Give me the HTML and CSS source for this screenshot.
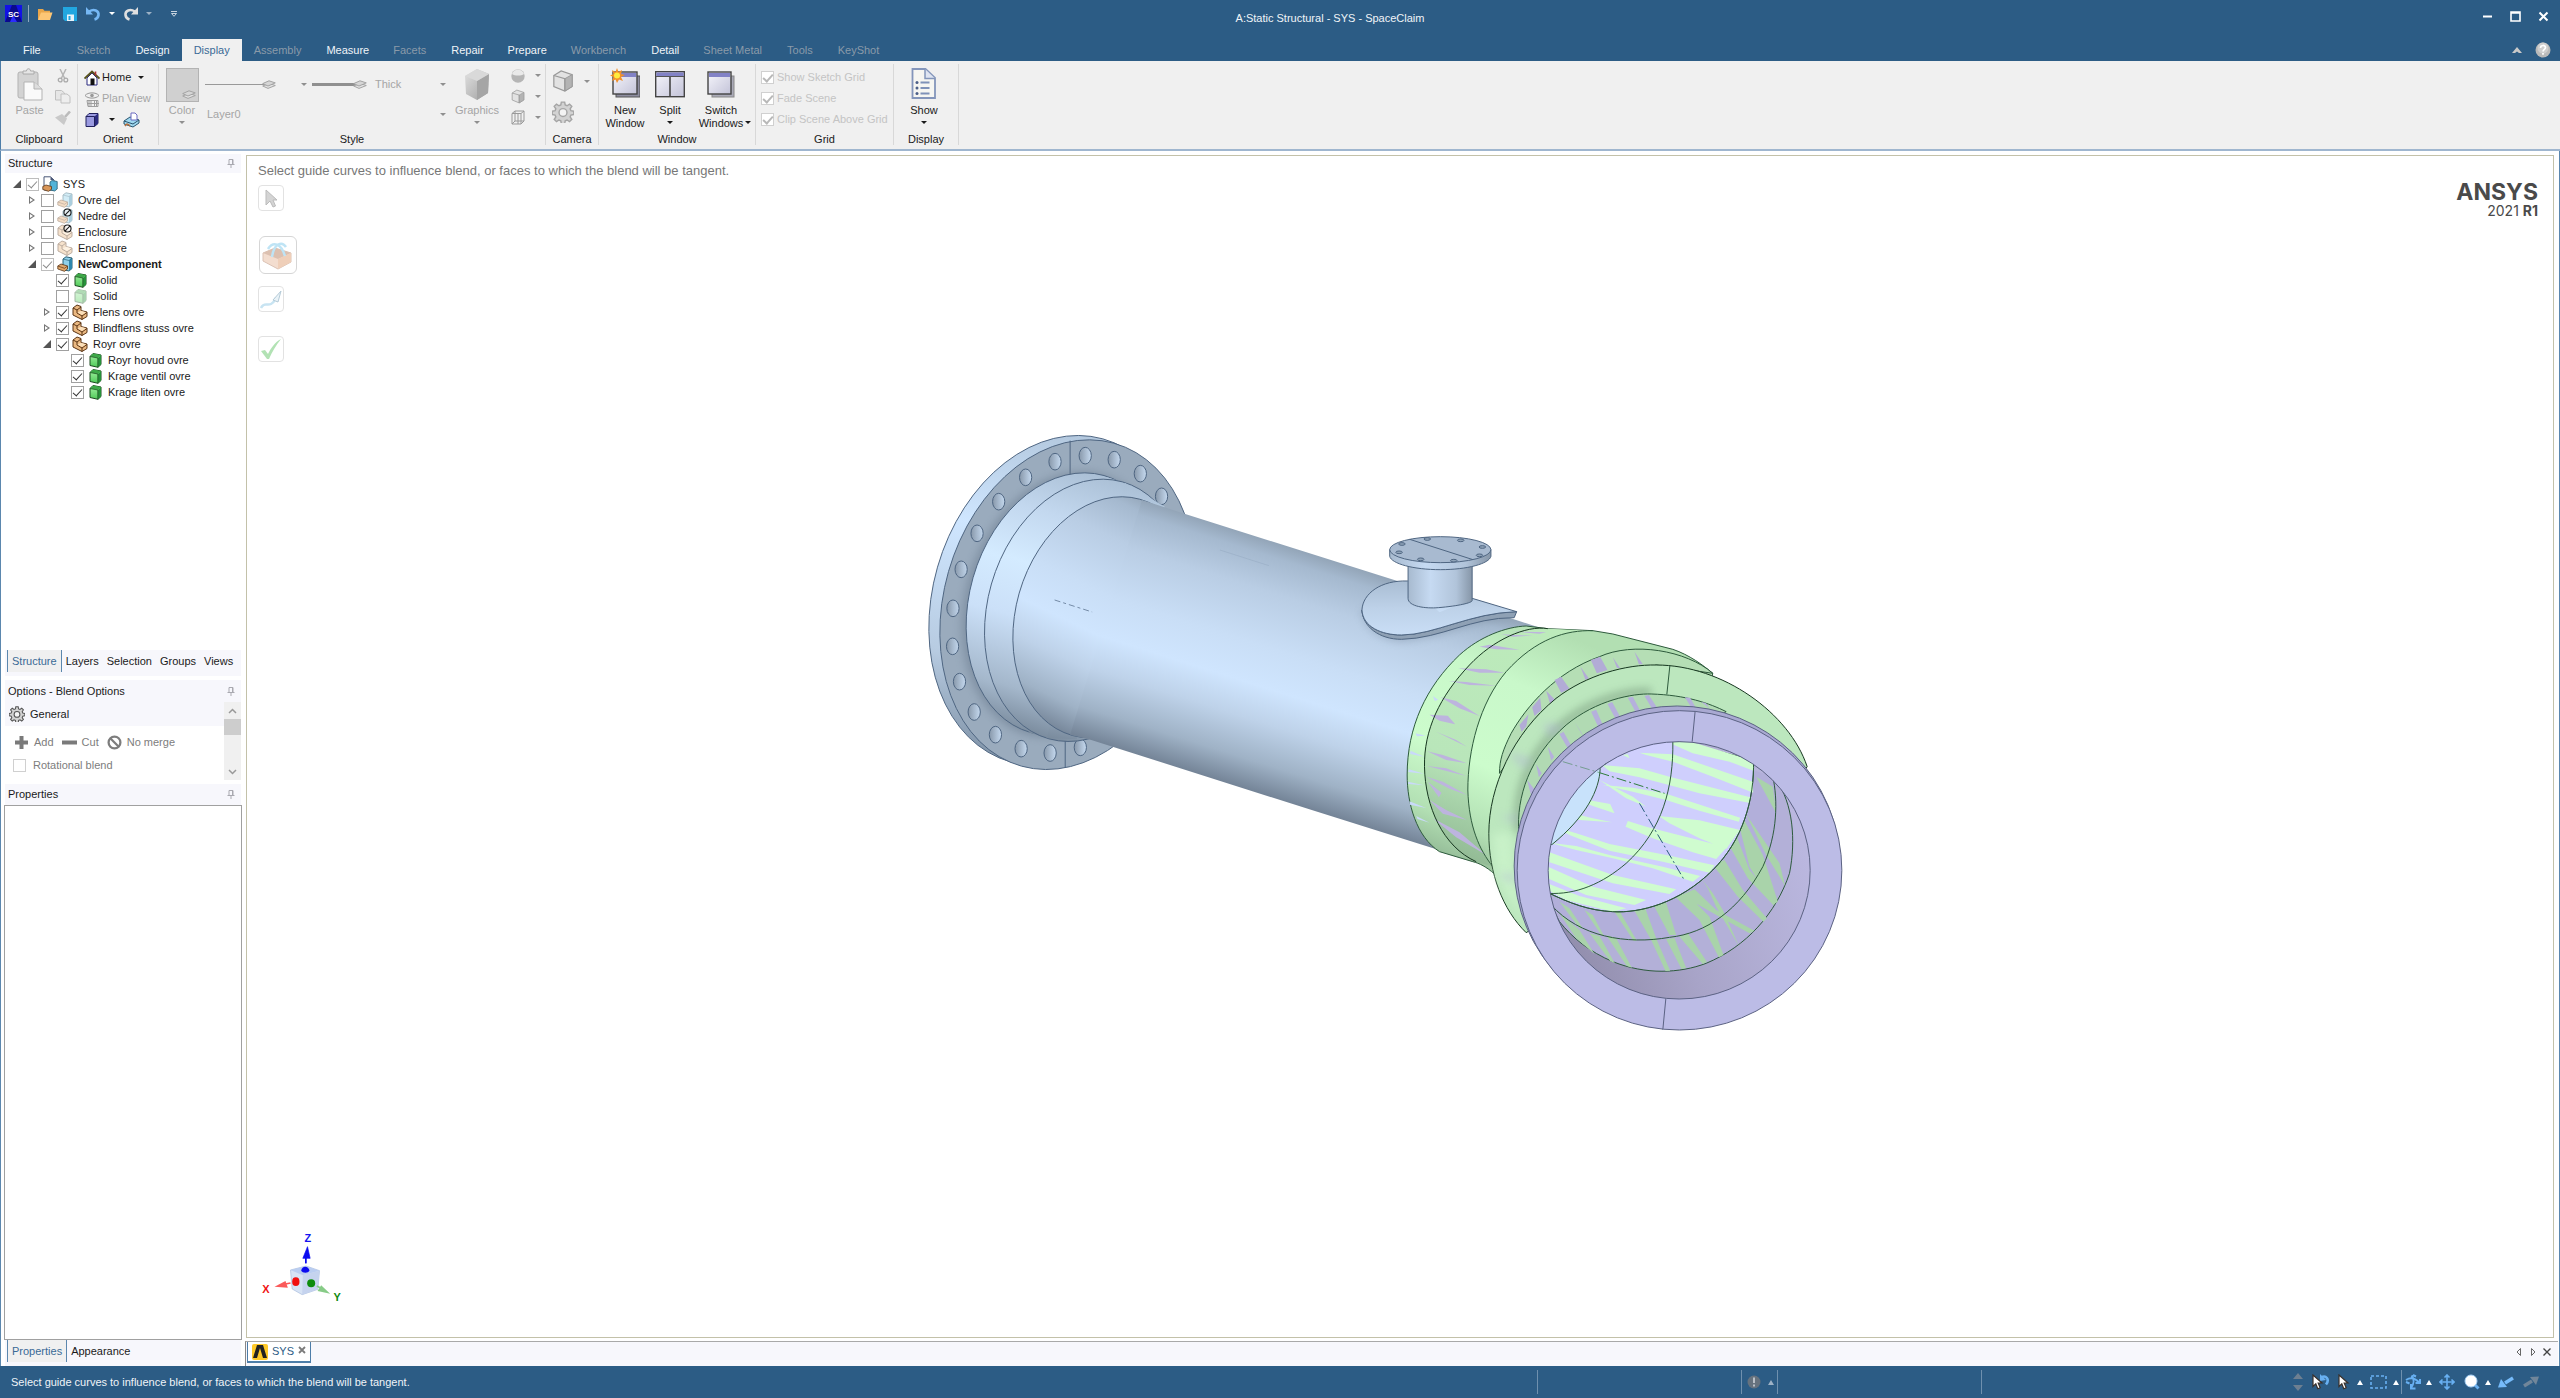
FILE: index.html
```html
<!DOCTYPE html>
<html lang="en">
<head>
<meta charset="utf-8">
<title>A:Static Structural - SYS - SpaceClaim</title>
<link rel="stylesheet" href="styles.css">
</head>
<body>
<svg class="defs" aria-hidden="true">
  <defs>
    <linearGradient id="gWin" x1="0" y1="0" x2="1" y2="1"><stop offset="0" stop-color="#f6f6fc"/><stop offset="1" stop-color="#c3c3d8"/></linearGradient>
    <linearGradient id="gGrey" x1="0" y1="0" x2="1" y2="1"><stop offset="0" stop-color="#e2e2e2"/><stop offset="1" stop-color="#9f9f9f"/></linearGradient>
    <linearGradient id="gGreen" x1="0" y1="0" x2="0" y2="1"><stop offset="0" stop-color="#a4f2a4"/><stop offset="1" stop-color="#4fca58"/></linearGradient>
    <symbol id="solid" viewBox="0 0 16 16"><path d="M3 4.500 6 1.500 14 3v9.500l-3 2.800-8-1.800z" fill="url(#gGreen)" stroke="#1c4a20"/><path d="M10.800 6 14 3v9.500l-3.200 2.800z" fill="#27923a"/><path d="M3 4.500 6 1.500 14 3l-3.200 3z" fill="#3da848"/><path d="M3 4.500 10.800 6v9.300" fill="none" stroke="#1c4a20" stroke-width=".7"/></symbol>
    <symbol id="part" viewBox="0 0 16 16"><path d="M1 4 5 1l4 1.500v4l6 1.500v4.500L10 15.500 1 11z" fill="#eab881" stroke="#5b3515"/><path d="M1 4l4 2 4-3M5 6v3l5 3 5-3.500M10 12v3.500" fill="none" stroke="#5b3515"/><path d="M5.500 8.500 9 6.700l5 1.500-4 2.800z" fill="#fbe0bb"/></symbol>
    <symbol id="comp" viewBox="0 0 16 16"><path d="M6 3 9 .8l6 1.200v10.500L12 15 6 13.500z" fill="#8fd0ea" stroke="#2b6075"/><path d="M12 4.500 15 2v10.500L12 15z" fill="#2f87ad"/><path d="M6 3l6 1.500L15 2" fill="none" stroke="#2b6075" stroke-width=".7"/><path d="M.8 10 4 8l6.500 2v3L7.500 15.300.8 13z" fill="#e0a76b" stroke="#5b3515" stroke-width=".8"/><path d="M.8 10 7.500 12.300l3-2.300" fill="none" stroke="#5b3515" stroke-width=".7"/></symbol>
    <symbol id="doc" viewBox="0 0 16 16"><path d="M2 .8h6.500L12 4v10H2z" fill="#fff" stroke="#4b5878"/><path d="M8.500.8V4H12z" fill="#4b5878"/><path d="M8 6l2-1.500 5.200 1V13l-2.500 2L8 14z" fill="#52b4d8" stroke="#2b6075" stroke-width=".8"/><path d="M.8 10.500 4 9l5.500 1.500v2.800L6.500 15.300.8 13.500z" fill="#d9975a" stroke="#5b3515" stroke-width=".8"/></symbol>
    <symbol id="ban" viewBox="0 0 16 16"><circle cx="8" cy="8" r="6.300" fill="none" stroke="currentColor" stroke-width="2.400"/><path d="M3.500 3.500l9 9" stroke="currentColor" stroke-width="2.400"/></symbol>
    <symbol id="banr" viewBox="0 0 16 16"><circle cx="8" cy="8" r="6.300" fill="#fff" fill-opacity=".6" stroke="currentColor" stroke-width="2"/><path d="M12.500 3.500l-9 9" stroke="currentColor" stroke-width="2"/></symbol>
    <symbol id="gear" viewBox="0 0 20 20"><path d="M8.500 1h3l.5 2.600 1.700.7 2.200-1.500 2.100 2.100-1.500 2.200.7 1.700 2.600.5v3l-2.600.5-.7 1.700 1.500 2.200-2.100 2.100-2.200-1.500-1.700.7-.5 2.600h-3L8 18l-1.700-.7-2.200 1.500L2 16.700l1.500-2.200-.7-1.700L.2 12.300v-3l2.600-.5.7-1.700L2 4.900l2.100-2.100 2.200 1.500L8 3.600z" fill="#d2d2d2" stroke="currentColor" stroke-width="1.300"/><circle cx="10" cy="10.500" r="3.600" fill="#f4f4f4" stroke="currentColor" stroke-width="1.300"/></symbol>
    <symbol id="cubeg" viewBox="0 0 24 24"><path d="M2 6 10 1l12 4v13l-8 5L2 18z" fill="#e2e2e2" stroke="#999" stroke-width="1.300"/><path d="M14 9.500 22 5v13l-8 5z" fill="#b3b3b3" stroke="#999"/><path d="M2 6l12 3.500V23" fill="none" stroke="#999" stroke-width="1.300"/></symbol>
    <symbol id="stack" viewBox="0 0 14 9"><path d="M.7 6 7 3.400 13.300 5.500 6 8.400z" fill="#e3e3e3" stroke="#a3a3a3"/><path d="M.7 3.600 7 .8l6.300 2.100L6 6z" fill="#d6d6d6" stroke="#a3a3a3"/></symbol>
    <symbol id="pin" viewBox="0 0 8 9"><path d="M2 .5h4v5H2zM.5 5.500h7M4 5.500V9" fill="none" stroke="#a9a9b0"/><path d="M5 .5h1v5H5z" fill="#a9a9b0"/></symbol>
    <symbol id="cursor" viewBox="0 0 12 16"><path d="M1 1v11.500l2.800-2.600 2 4.800 2.400-1-2-4.700H10z" fill="#fff" stroke="#3a302a" stroke-width="1.200"/></symbol>
  </defs>
</svg>

<header class="titlebar">
  <div class="qat">
    <svg class="sc" viewBox="0 0 17 17" role="img" aria-label="SpaceClaim"><rect width="17" height="17" fill="#1212e6"/><path d="M0 17 7 0h4l6 17z" fill="#0a0a8c"/><path d="M5 17 8 10l4 7z" fill="#2b2bff"/><text x="8.500" y="11.500" text-anchor="middle" class="sc-text">SC</text></svg>
    <span class="qat-sep"></span>
    <button class="q q-open" aria-label="Open"><svg viewBox="0 0 16 14"><path d="M1 13V2h5l1.500 1.800H13V6" fill="#e9a64a"/><path d="M1 13 4 5.500h11.500L13 13z" fill="#fdc675"/></svg></button>
    <button class="q q-save" aria-label="Save"><svg viewBox="0 0 14 14"><path d="M0 0h14v14H2l-2-2z" fill="#22a7e0"/><path d="M4 7.500h7V14H4z" fill="#e8f4fb"/><path d="M5.500 9h2v4h-2z" fill="#22a7e0"/></svg></button>
    <button class="q q-undo" aria-label="Undo"><svg viewBox="0 0 15 14"><path d="M3 4.500C8 1.500 13 3.500 12.500 8c-.3 2.500-2.300 4-4 4.500" fill="none" stroke="#76b8f5" stroke-width="2.600"/><path d="M0 0v7.500h7z" fill="#76b8f5"/></svg></button>
    <button class="q q-drop" aria-label="Undo list"><i class="caret white"></i></button>
    <button class="q q-undo" aria-label="Redo"><svg viewBox="0 0 15 14"><path d="M12 4.500C7 1.500 2 3.500 2.500 8c.3 2.500 2.300 4 4 4.500" fill="none" stroke="#dfdfdf" stroke-width="2.600"/><path d="M15 0v7.500H8z" fill="#dfdfdf"/></svg></button>
    <button class="q q-drop" aria-label="Redo list"><i class="caret pale"></i></button>
    <button class="q q-more" aria-label="Customize toolbar"><svg viewBox="0 0 6 6"><path d="M0 .5h6M.5 2.500h5L3 5.300z" fill="none" stroke="#c8d4e0"/></svg></button>
  </div>
  <div class="title">A:Static Structural - SYS - SpaceClaim</div>
  <div class="winctl">
    <button aria-label="Minimize"><svg viewBox="0 0 11 11"><path d="M1 5.500h9" stroke="#fff" stroke-width="2"/></svg></button>
    <button aria-label="Maximize"><svg viewBox="0 0 11 11"><path d="M1 1h9v9H1zM1 2h9" fill="none" stroke="#fff" stroke-width="1.600"/></svg></button>
    <button aria-label="Close"><svg viewBox="0 0 11 11"><path d="M1.500 1.500l8 8M9.500 1.500l-8 8" stroke="#fff" stroke-width="2"/></svg></button>
  </div>
</header>

<nav class="tabs">
  <button class="tab file">File</button>
  <button class="tab off">Sketch</button>
  <button class="tab">Design</button>
  <button class="tab active">Display</button>
  <button class="tab off">Assembly</button>
  <button class="tab">Measure</button>
  <button class="tab off">Facets</button>
  <button class="tab">Repair</button>
  <button class="tab">Prepare</button>
  <button class="tab off">Workbench</button>
  <button class="tab">Detail</button>
  <button class="tab off">Sheet Metal</button>
  <button class="tab off">Tools</button>
  <button class="tab off">KeyShot</button>
  <div class="tabs-end">
    <button aria-label="Collapse ribbon"><svg width="10" height="7" viewBox="0 0 10 7"><path d="M0 6 5 0l5 6H7L5 4.500 3 6z" fill="#c9c9c9"/></svg></button>
    <button aria-label="Help"><svg width="16" height="16" viewBox="0 0 16 16"><circle cx="8" cy="8" r="7.500" fill="#b9b9b9"/><circle cx="8" cy="6" r="5.500" fill="#cfcfcf"/><path d="M5.500 6c0-3.300 5-3.300 5-.4 0 1.800-2.400 1.800-2.400 3.800M8 11v1.800" fill="none" stroke="#fff" stroke-width="1.700"/></svg></button>
  </div>
</nav>

<section class="ribbon">
  <div class="group g-clip">
    <div class="gbody">
      <button class="big dim" disabled><svg class="ico" viewBox="0 0 26 34"><rect x="1" y="4" width="20" height="26" rx="2" fill="#d3d3d3" stroke="#b3b3b3"/><path d="M6 6V3h3.500c0-3 4-3 4 0H17v3z" fill="#e5e5e5" stroke="#aaa"/><path d="M7 14h10l8 7v11H7z" fill="#fafafa" stroke="#b3b3b3"/><path d="M17 14v7h8" fill="#ddd" stroke="#b3b3b3"/></svg><span>Paste</span></button>
      <div class="minis">
        <button disabled aria-label="Cut"><svg width="12" height="14" viewBox="0 0 12 14"><path d="M3 0l5 10M9 0 4 10" stroke="#b5b5b5" stroke-width="1.500"/><circle cx="3.200" cy="11" r="1.900" fill="none" stroke="#aaa" stroke-width="1.300"/><circle cx="8.800" cy="11" r="1.900" fill="none" stroke="#aaa" stroke-width="1.300"/></svg></button>
        <button disabled aria-label="Copy"><svg width="16" height="14" viewBox="0 0 16 14"><path d="M.5.500h6l3 2.500v7h-9z" fill="#e6e6e6" stroke="#c0c0c0"/><path d="M6 4h6l3 2.500V13H6z" fill="#eee" stroke="#c0c0c0"/></svg></button>
        <button disabled aria-label="Format painter"><svg width="16" height="14" viewBox="0 0 16 14"><path d="M15 .5 10 6" stroke="#bbb" stroke-width="2.600"/><path d="M0 6.500 7 3l5 4.500L9 14z" fill="#c9c9c9"/></svg></button>
      </div>
    </div>
    <div class="glabel">Clipboard</div>
  </div>

  <div class="group g-orient">
    <div class="gbody rows">
      <button class="line"><svg width="16" height="16" viewBox="0 0 16 16"><path d="M3 8v7h10V8L8 3z" fill="#fff" stroke="#2b2b80"/><path d="M.5 8.500 8 1.500l7.500 7" fill="none" stroke="#55511a" stroke-width="1.800"/><path d="M11.500 1.500v4" stroke="#a33" stroke-width="1.600"/><path d="M6.500 8.500h4V15h-4z" fill="#111"/></svg><span>Home</span><i class="caret"></i></button>
      <button class="line dim" disabled><svg width="16" height="16" viewBox="0 0 16 16"><path d="M1 4.500C4 1 12 1 15 4.500 12 8 4 8 1 4.500z" fill="none" stroke="#999"/><circle cx="8" cy="4.500" r="1.800" fill="#999"/><path d="M3 9.500h11v6H4zM3.500 12.500H15M7 9.500v6M10.500 9.500v6M5 9.500v6M12.500 9.500v6" fill="none" stroke="#9d9d9d"/></svg><span>Plan View</span></button>
      <div class="line">
        <button class="plain" aria-label="View orientation"><svg width="16" height="16" viewBox="0 0 16 16"><path d="M2 4.500 5 1.500h9v10l-3.500 3H2z" fill="#9a9ae0" stroke="#20205c"/><path d="M10.500 4.500 14 1.500v10l-3.500 3z" fill="#2b2b80"/><path d="M2 4.500h8.500v10" fill="none" stroke="#20205c"/></svg></button>
        <button class="plain drop1" aria-label="Orientation list"><i class="caret"></i></button>
        <button class="plain" aria-label="Snap view"><svg width="17" height="16" viewBox="0 0 17 16"><path d="M1 9 7 5l9 3v3l-6 4-9-3z" fill="#9fd8f0" stroke="#2a5670"/><path d="M1 9l9 3 6-4" fill="none" stroke="#2a5670"/><path d="M8 1h4l2 2v5H8z" fill="#fff" stroke="#6a6ac0"/><path d="M2 14c2-3 3-2 5 0" fill="none" stroke="#b56e3b" stroke-width="1.500"/></svg></button>
      </div>
    </div>
    <div class="glabel">Orient</div>
  </div>

  <div class="group g-style">
    <div class="gbody">
      <button class="big dim" disabled><span class="swatch"><svg width="14" height="9"><use href="#stack"/></svg></span><span>Color</span><i class="caret"></i></button>
      <div class="lines">
        <button class="wide w1" disabled aria-label="Line style"><span class="rule thin"></span><svg width="14" height="9"><use href="#stack"/></svg><i class="caret"></i></button>
        <button class="wide w2" disabled><span class="rule thick"></span><svg width="14" height="9"><use href="#stack"/></svg><span class="lt">Thick</span><i class="caret"></i></button>
        <button class="wide w3" disabled><span class="lt">Layer0</span><i class="caret"></i></button>
      </div>
      <button class="big dim" disabled><svg class="ico" viewBox="0 0 26 34"><path d="M1 8 13 1l12 5-1 19-11 7L2 26z" fill="url(#gGrey)"/><path d="M13 13 25 6l-1 19-11 7z" fill="#a5a5a5"/><path d="M1 8 13 1l12 5-12 7z" fill="#d9d9d9"/></svg><span>Graphics</span><i class="caret"></i></button>
      <div class="minis duo">
        <button disabled aria-label="Shaded"><svg width="14" height="14" viewBox="0 0 14 14"><circle cx="7" cy="7" r="6.700" fill="#b5b5b5"/><path d="M1 5c2-6 10-6 12 0-3 2-9 2-12 0z" fill="#e9e9e9"/></svg><i class="caret"></i></button>
        <button disabled aria-label="Hidden lines"><svg width="14" height="15"><use href="#cubeg"/></svg><i class="caret"></i></button>
        <button disabled aria-label="Wireframe"><svg width="14" height="15" viewBox="0 0 14 15"><path d="M1 3.500 4 1h9v10l-3 3H1zM1 3.500h9V14M10 3.500 13 1M4 1v10H13M4 11l-3 3M7 3.500V14" fill="none" stroke="#9a9a9a"/></svg><i class="caret"></i></button>
      </div>
    </div>
    <div class="glabel">Style</div>
  </div>

  <div class="group g-camera">
    <div class="gbody col">
      <button class="plain cam" disabled aria-label="Camera view"><svg width="22" height="24"><use href="#cubeg"/></svg><i class="caret"></i></button>
      <button class="plain cam" disabled aria-label="Camera settings"><svg class="lt" width="22" height="22"><use href="#gear"/></svg></button>
    </div>
    <div class="glabel">Camera</div>
  </div>

  <div class="group g-window">
    <div class="gbody">
      <button class="big"><svg class="ico w30" viewBox="0 0 30 34"><rect x="6" y="8" width="24" height="21" fill="#8d8da0" stroke="#555"/><rect x="3" y="4" width="24" height="22" fill="url(#gWin)" stroke="#444" stroke-width="1.400"/><rect x="4" y="5" width="22" height="4" fill="#8282c6"/><path d="M7 0l1.500 4L12 2l-1 4 4 1-4 2 2 4-4-1.500L7 15l-1.500-3.500L2 13l1.500-4L0 7.500 3.500 6 2 2l3.500 2z" fill="#f2902a"/><circle cx="7" cy="7.500" r="3" fill="#ffec3d"/></svg><span>New<br>Window</span></button>
      <button class="big"><svg class="ico w30" viewBox="0 0 30 34"><rect x=".7" y="3.700" width="28.600" height="25" fill="url(#gWin)" stroke="#444" stroke-width="1.400"/><path d="M1.400 4.500h27.200v4H1.400z" fill="#8282c6"/><path d="M15 8.500v20" stroke="#444" stroke-width="1.600"/><path d="M1 8.500h28" stroke="#555"/></svg><span>Split</span><i class="caret"></i></button>
      <button class="big"><svg class="ico w30" viewBox="0 0 30 34"><rect x="6" y="8" width="22" height="21" fill="#aaaab8" stroke="#888"/><rect x="2" y="4" width="23" height="22" fill="url(#gWin)" stroke="#444" stroke-width="1.400"/><rect x="3" y="5" width="21" height="4" fill="#8282c6"/></svg><span>Switch<br>Windows<i class="caret inl"></i></span></button>
    </div>
    <div class="glabel">Window</div>
  </div>

  <div class="group g-grid">
    <div class="gbody rows">
      <label class="chk"><input type="checkbox" checked disabled>Show Sketch Grid</label>
      <label class="chk"><input type="checkbox" checked disabled>Fade Scene</label>
      <label class="chk"><input type="checkbox" checked disabled>Clip Scene Above Grid</label>
    </div>
    <div class="glabel">Grid</div>
  </div>

  <div class="group g-display">
    <div class="gbody">
      <button class="big"><svg class="ico" viewBox="0 0 26 34"><path d="M1.500 1h13L24 10v20H1.500z" fill="#f6f6f2" stroke="#8496bb" stroke-width="1.800"/><path d="M14 1v9.500h10" fill="#dfe5f2" stroke="#8496bb" stroke-width="1.500"/><g stroke="#7f92b8" stroke-width="2"><path d="M9.500 14.500h9M9.500 20h9M9.500 25.500h9"/></g><g fill="#4c5f88"><circle cx="6" cy="14.500" r="1.500"/><circle cx="6" cy="20" r="1.500"/><circle cx="6" cy="25.500" r="1.500"/></g></svg><span>Show</span><i class="caret"></i></button>
    </div>
    <div class="glabel">Display</div>
  </div>
</section>

<main class="work">
  <aside class="side">
    <h2 class="phead first">Structure<svg><use href="#pin"/></svg></h2>
    <ul class="tree">
      <li class="d0"><i class="open"></i><input type="checkbox" class="soft" checked aria-label="SYS"><svg><use href="#doc"/></svg><span>SYS</span></li>
      <li class="d1"><i class="shut"></i><input type="checkbox" aria-label="Ovre del"><svg class="faded"><use href="#comp"/></svg><span>Ovre del</span></li>
      <li class="d1"><i class="shut"></i><input type="checkbox" aria-label="Nedre del"><svg viewBox="0 0 16 16"><use href="#comp" opacity=".4"/><use href="#banr" x="6" width="9" height="9"/></svg><span>Nedre del</span></li>
      <li class="d1"><i class="shut"></i><input type="checkbox" aria-label="Enclosure"><svg viewBox="0 0 16 16"><use href="#part" opacity=".4"/><use href="#banr" x="6" width="9" height="9"/></svg><span>Enclosure</span></li>
      <li class="d1"><i class="shut"></i><input type="checkbox" aria-label="Enclosure"><svg class="faded"><use href="#part"/></svg><span>Enclosure</span></li>
      <li class="d1"><i class="open"></i><input type="checkbox" class="soft" checked aria-label="NewComponent"><svg><use href="#comp"/></svg><b>NewComponent</b></li>
      <li class="d2"><i></i><input type="checkbox" checked aria-label="Solid"><svg><use href="#solid"/></svg><span>Solid</span></li>
      <li class="d2"><i></i><input type="checkbox" aria-label="Solid"><svg class="faded"><use href="#solid"/></svg><span>Solid</span></li>
      <li class="d2"><i class="shut"></i><input type="checkbox" checked aria-label="Flens ovre"><svg><use href="#part"/></svg><span>Flens ovre</span></li>
      <li class="d2"><i class="shut"></i><input type="checkbox" checked aria-label="Blindflens stuss ovre"><svg><use href="#part"/></svg><span>Blindflens stuss ovre</span></li>
      <li class="d2"><i class="open"></i><input type="checkbox" checked aria-label="Royr ovre"><svg><use href="#part"/></svg><span>Royr ovre</span></li>
      <li class="d3"><i></i><input type="checkbox" checked aria-label="Royr hovud ovre"><svg><use href="#solid"/></svg><span>Royr hovud ovre</span></li>
      <li class="d3"><i></i><input type="checkbox" checked aria-label="Krage ventil ovre"><svg><use href="#solid"/></svg><span>Krage ventil ovre</span></li>
      <li class="d3"><i></i><input type="checkbox" checked aria-label="Krage liten ovre"><svg><use href="#solid"/></svg><span>Krage liten ovre</span></li>
    </ul>
    <div class="ptabs">
      <button class="on">Structure</button><button>Layers</button><button>Selection</button><button>Groups</button><button>Views</button>
    </div>
    <h2 class="phead opt">Options - Blend Options<svg><use href="#pin"/></svg></h2>
    <div class="options">
      <div class="optbody">
        <div class="general"><svg width="16" height="16"><use href="#gear"/></svg>General</div>
        <div class="ops">
          <button disabled><svg width="15" height="15" viewBox="0 0 15 15"><path d="M7.500 1v13M1 7.500h13" stroke="#7a7a7a" stroke-width="4"/></svg>Add</button>
          <button disabled><svg width="15" height="15" viewBox="0 0 15 15"><path d="M0 7.500h15" stroke="#7a7a7a" stroke-width="4"/></svg>Cut</button>
          <button disabled><svg width="15" height="15"><use href="#ban"/></svg>No merge</button>
        </div>
        <label class="rot"><input type="checkbox" disabled>Rotational blend</label>
      </div>
      <div class="scroll"><svg width="9" height="6" viewBox="0 0 9 6"><path d="M1 5l3.500-3.500L8 5" fill="none" stroke="#999" stroke-width="1.500"/></svg><span class="thumb"></span><svg class="down" width="9" height="6" viewBox="0 0 9 6"><path d="M1 1l3.500 3.500L8 1" fill="none" stroke="#999" stroke-width="1.500"/></svg></div>
    </div>
    <h2 class="phead prop">Properties<svg><use href="#pin"/></svg></h2>
    <div class="props"></div>
    <div class="ptabs bottom"><button class="on">Properties</button><button>Appearance</button></div>
  </aside>

  <section class="docs">
    <div class="canvas">
      <svg class="scene" viewBox="248 156 2305 1181" preserveAspectRatio="xMidYMid meet" role="img" aria-label="Pipe with flange, nozzle and elbow">
        <defs>
          <linearGradient id="pipe" gradientUnits="userSpaceOnUse" x1="900" y1="390" x2="642" y2="1057"><stop offset="0" stop-color="#93a5b8"/><stop offset=".06" stop-color="#a5b9cf"/><stop offset=".2" stop-color="#b9cde4"/><stop offset=".42" stop-color="#c9def6"/><stop offset=".58" stop-color="#cfe5fe"/><stop offset=".72" stop-color="#bed2e9"/><stop offset=".88" stop-color="#9fb2c6"/><stop offset="1" stop-color="#748497"/></linearGradient>
          <linearGradient id="hub" gradientUnits="userSpaceOnUse" x1="520" y1="210" x2="340" y2="985"><stop offset="0" stop-color="#aabfd5"/><stop offset=".2" stop-color="#c3d8ef"/><stop offset=".4" stop-color="#d4ebff"/><stop offset=".6" stop-color="#cbe0f8"/><stop offset=".85" stop-color="#a4b7cb"/><stop offset="1" stop-color="#77889a"/></linearGradient>
          <linearGradient id="rim" x1="0" y1="0" x2="0" y2="1"><stop offset="0" stop-color="#b3c8de"/><stop offset=".3" stop-color="#cfe6ff"/><stop offset=".7" stop-color="#b7cbe1"/><stop offset="1" stop-color="#7f92a6"/></linearGradient>
          <linearGradient id="neck" x1="0" y1="0" x2="1" y2="0"><stop offset="0" stop-color="#a7bacf"/><stop offset=".35" stop-color="#c6daf2"/><stop offset=".75" stop-color="#b1c4da"/><stop offset="1" stop-color="#8696a8"/></linearGradient>
          <linearGradient id="hole" x1="0" y1="0" x2="1" y2="0"><stop offset="0" stop-color="#8898aa"/><stop offset="1" stop-color="#c6daf0"/></linearGradient>
          <linearGradient id="sad" x1="0" y1="0" x2="0" y2="1"><stop offset="0" stop-color="#a9bdd3"/><stop offset=".5" stop-color="#bdd1e8"/><stop offset="1" stop-color="#c9def6"/></linearGradient>
          <linearGradient id="elbow" gradientUnits="userSpaceOnUse" x1="500" y1="80" x2="200" y2="780"><stop offset="0" stop-color="#b2dfb2"/><stop offset=".25" stop-color="#c9f8ca"/><stop offset=".6" stop-color="#ccfccc"/><stop offset=".85" stop-color="#b2dfb3"/><stop offset="1" stop-color="#93ba96"/></linearGradient>
          <linearGradient id="band" gradientUnits="userSpaceOnUse" x1="460" y1="80" x2="200" y2="780"><stop offset="0" stop-color="#bdebbb"/><stop offset=".6" stop-color="#b9e6ba"/><stop offset="1" stop-color="#8fb792"/></linearGradient>
          <linearGradient id="bore" gradientUnits="userSpaceOnUse" x1="560" y1="1050" x2="1290" y2="800"><stop offset="0" stop-color="#918dac"/><stop offset=".45" stop-color="#a8a4c8"/><stop offset="1" stop-color="#bab7df"/></linearGradient>
          <clipPath id="boreClip"><ellipse cx="899" cy="811" rx="393" ry="386"/></clipPath>
          <filter id="soft" x="-30%" y="-30%" width="160%" height="160%"><feGaussianBlur stdDeviation="12"/></filter>
        </defs>

        <g class="edges" transform="translate(900 410) scale(.408163 .333333)">
          <ellipse cx="385" cy="571" rx="306" ry="499" transform="rotate(9.700 385 571)" fill="url(#rim)"/>
          <ellipse cx="412" cy="584" rx="306" ry="499" transform="rotate(9.700 412 584)" fill="#9aabbd"/>
          <path d="M418 92v104M406 980v94"/>
          <g fill="url(#hole)">
            <ellipse cx="455" cy="137" rx="15" ry="25"/><ellipse cx="526" cy="149" rx="15" ry="25"/><ellipse cx="590" cy="191" rx="15" ry="25"/><ellipse cx="642" cy="259" rx="15" ry="25"/><ellipse cx="381" cy="155" rx="15" ry="25"/><ellipse cx="309" cy="202" rx="15" ry="25"/><ellipse cx="243" cy="275" rx="15" ry="25"/><ellipse cx="190" cy="370" rx="15" ry="25"/><ellipse cx="151" cy="478" rx="15" ry="25"/><ellipse cx="131" cy="595" rx="15" ry="25"/><ellipse cx="130" cy="709" rx="15" ry="25"/><ellipse cx="147" cy="815" rx="15" ry="25"/><ellipse cx="183" cy="906" rx="15" ry="25"/><ellipse cx="235" cy="974" rx="15" ry="25"/><ellipse cx="298" cy="1016" rx="15" ry="25"/><ellipse cx="369" cy="1029" rx="15" ry="25"/><ellipse cx="443" cy="1012" rx="15" ry="25"/>
          </g>
          <ellipse cx="405" cy="584" rx="246" ry="402" transform="rotate(9.700 405 584)" class="flat" fill="#5f7083" opacity=".45" filter="url(#soft)"/>
          <ellipse cx="411" cy="582" rx="242" ry="397" transform="rotate(9.700 411 582)" fill="url(#hub)"/>
          <path class="flat" fill="url(#hub)" d="M507 201 552 218 360 984 316 967z"/>
          <ellipse cx="456" cy="601" rx="242" ry="397" transform="rotate(9.700 456 601)" fill="url(#hub)"/>
          <path class="flat" fill="url(#hub)" d="M552 218 650 290 434 988 360 984z"/>
          <ellipse cx="506" cy="622" rx="223" ry="365" transform="rotate(9.700 506 622)" fill="url(#pipe)"/>
          <path class="flat" fill="url(#pipe)" d="M594 270 640 288 700 312 1220 513 1640 682 1440 1366 1010 1200 470 990 418 974z"/>
          <path stroke-dasharray="6 3 3 3" opacity=".7" d="M380 570 472 606"/>
          <path opacity=".12" d="M785 420 905 467"/>

          <path class="flat" fill="#5f7083" opacity=".3" filter="url(#soft)" d="M1133 600C1140 660 1180 690 1230 695 1330 685 1400 630 1505 625L1400 590z"/>
          <path fill="#8fa1b5" d="M1133 600C1135 650 1180 675 1230 675 1310 675 1400 608 1512 605L1506 623C1400 622 1330 685 1230 688 1175 688 1135 650 1133 600z"/>
          <path fill="url(#sad)" d="M1245 513C1180 510 1135 550 1133 600 1135 650 1180 675 1230 675 1310 675 1400 608 1512 605L1403 565z"/>
          <path class="flat" fill="url(#sad)" d="M1243 515h100l60 52-80 40z"/>
          <path fill="url(#neck)" d="M1246 460V565C1246 590 1290 596 1320 593 1370 588 1403 578 1403 572V460z"/>
          <path fill="url(#neck)" d="M1201 419v20c4 22 58 40 124 40s120-18 124-40v-20z"/>
          <ellipse cx="1325" cy="419" rx="124" ry="39" fill="#a8bad0"/>
          <path d="M1250 388 1405 449"/>
          <g fill="#8fa3b8"><ellipse cx="1293" cy="387" rx="8" ry="4"/><ellipse cx="1375" cy="391" rx="8" ry="4"/><ellipse cx="1428" cy="411" rx="8" ry="4"/><ellipse cx="1421" cy="436" rx="8" ry="4"/><ellipse cx="1358" cy="452" rx="8" ry="4"/><ellipse cx="1277" cy="448" rx="8" ry="4"/><ellipse cx="1224" cy="427" rx="8" ry="4"/><ellipse cx="1231" cy="402" rx="8" ry="4"/></g>
        </g>

        <g class="edges green" transform="translate(1380 600) scale(.333333)">
          <path fill="url(#elbow)" d="M440 78 505 86 640 92 700 102 880 148C930 165 970 195 1000 220L900 600 345 822C320 800 300 790 280 785L180 755C110 710 83 610 83 525 83 380 140 260 240 165 300 110 380 80 440 78z"/>
          <path class="flat" fill="url(#band)" d="M505 86C440 78 340 120 270 195 180 290 133 390 135 500 137 620 190 740 290 785L340 800C300 750 268 680 265 570 265 450 300 310 380 215 470 115 560 92 640 92z"/>
          <g class="flat" fill="#bdb4de">
            <path d="M365 103 460 107 400 110zM395 94 500 97 480 101zM300 140 330 134 420 149 350 148zM236 205 320 208 375 218 300 218zM208 243 260 246 350 257 270 255zM183 292 230 303 300 348 240 325zM150 344 205 347 227 373 180 362zM143 454 190 465 262 490 200 480zM142 498 200 505 260 528zM140 530 190 545 262 585 210 566zM145 545 186 578 178 592zM150 600 200 630 262 660 190 641zM160 655 240 697 320 765 230 712zM170 395 230 420 262 440z"/>
            <path fill="#c9d9fa" d="M160 288 176 299 166 303zM108 400 138 407 112 409zM93 452 134 470 92 462zM88 508 134 521 86 516zM86 545 133 556 86 552zM90 604 140 624 91 614zM110 648 150 668 114 657z"/>
          </g>
          <path class="b2" d="M505 86C440 75 340 120 270 195 180 290 133 390 135 500 137 620 190 740 290 785"/>
          <path d="M640 92C560 90 470 115 380 215 300 310 265 450 265 570 268 680 300 750 340 800"/>
          <path fill="#b5deb5" d="M1000 220C920 150 760 125 660 170 530 215 440 320 395 400 370 450 360 480 360 520L530 295 830 195z"/>
          <g class="flat" fill="#b2acd6"><path d="M634 180 662 170 684 210 652 220zM525 240 545 230 570 266 545 278zM765 155 790 193 778 193zM603 200 628 235 618 240zM458 322 482 293 486 330 465 348zM420 375 447 343 440 380 426 395zM500 272 527 300 512 312zM700 172 722 205 712 203z"/></g>

          <path class="bold" fill="#bce7be" d="M440 998C370 930 328 820 328 700 328 560 400 400 530 295 620 225 740 193 830 195 1030 195 1230 340 1283 500L1200 620 600 900z"/>
          <path class="flat" filter="url(#soft)" fill="none" stroke="#7fa283" opacity=".7" stroke-width="10" d="M420 700C405 590 445 465 555 370 645 295 755 275 815 276"/>
          <path class="flat" fill="#d0f8cf" opacity=".6" filter="url(#soft)" d="M350 830 430 960 405 820 395 700 340 700z"/>
          <g class="flat" fill="#b0b4d6" opacity=".5" filter="url(#soft)"><path d="M385 455 460 480 430 505zM490 370 560 380 510 410zM360 650 420 645 415 670zM350 820 405 825 400 850z"/></g>
          <path d="M871 198 862 283"/>
          <path fill="#b1dab3" d="M418 700C410 590 450 470 560 375 650 300 760 280 815 282 920 285 990 310 1040 335L900 420 560 600z"/>
          <g class="flat" fill="#b5b0dc"><path d="M684 312 698 306 722 350 708 356zM745 293 760 290 782 332 768 335zM795 288 808 285 832 322 817 325zM916 292 932 293 948 322 935 322zM965 305 980 310 990 325zM635 335 650 329 670 375 656 380zM540 402 552 395 578 442 566 447zM505 440 524 470 515 482zM470 493 487 520 478 532zM443 540 468 572 456 592zM585 365 606 398 612 412z"/></g>
          <ellipse class="lav" cx="893" cy="798" rx="489" ry="480" fill="#a9a9d2"/>
          <ellipse class="lav" cx="900" cy="811" rx="487" ry="479" fill="#bcbce6"/>
          <path class="lav" d="M947 333 938 425M859 1196 850 1289"/>
          <g clip-path="url(#boreClip)">
            <rect class="flat" x="500" y="420" width="800" height="780" fill="url(#bore)"/>
            <path fill="#b3b0d8" d="M1190 540C1240 610 1250 720 1230 820 1190 940 1100 1040 980 1090 900 1120 800 1125 700 1085 630 1055 580 1015 540 965L400 700 800 400z"/>
            <path class="flat" fill="#b2afda" d="M1180 530C1195 600 1195 700 1150 800 1080 930 980 1000 870 1012 740 1035 600 1010 515 915L400 700 800 400z"/>
            <g class="flat" fill="#a9d3aa">
              <path d="M1098 640 1108 655 1200 790 1217 858 1160 765zM1080 680 1095 662 1150 765 1195 905 1180 915 1110 800zM1045 730 1070 705 1110 810 1190 905 1182 916 1105 835zM1000 795 1035 780 1090 870 1162 955 1152 965 1075 890zM965 835 1000 880 1030 930 1078 1038 1010 920 985 865zM905 885 945 868 1010 930 1125 992 1110 1000 1020 950zM822 915 860 908 890 1005 870 1005zM885 888 920 880 990 950 1032 1065 1018 1072 960 960zM765 932 798 927 832 1020 872 1112 858 1113 815 1020zM900 1010 925 1000 982 1085 970 1092zM860 1018 885 1014 920 1104 906 1107zM705 935 722 937 772 1022 762 1022zM680 1005 710 1015 757 1103 742 1098zM615 930 640 945 672 1005 665 1005zM630 1000 660 1008 706 1090 692 1083zM540 905 570 925 610 985 600 985zM540 940 600 990 645 1062 590 1015zM1130 530 1180 560 1190 640zM1205 575 1225 640 1240 690z"/>
            </g>
            <path d="M1180 530C1195 600 1195 700 1150 800 1080 930 980 1000 870 1012 740 1035 600 1010 515 915"/>
            <path fill="#cfcffd" d="M1122 480C1125 600 1090 720 1000 810 900 910 780 940 700 935 630 932 570 910 500 875L400 700 800 400z"/>
            <g class="flat" fill="#cffccf">
              <path d="M878 424 940 427 1122 483 1122 512 1050 485 940 460 882 434zM780 458 880 463 1120 545 1121 578 1000 530 880 485 800 465zM730 465 745 463 750 475zM668 495 780 505 870 530 1112 592 1108 608 960 580 860 553 780 532 690 514zM670 555 760 563 855 580 1082 653 1078 665 960 632 860 600 760 575zM660 540 760 590 800 620 740 595zM838 648 960 661 1082 690 1070 705 1040 747 960 715 870 670zM745 663 800 680 1042 742 1010 777 940 757 820 715 738 680zM560 588 692 612 705 640 640 618zM540 630 640 655 698 667 600 660zM525 680 590 700 690 732 860 765 1005 796 990 818 850 785 690 752 570 705zM510 728 590 738 690 765 850 800 962 828 940 845 820 805 700 775 590 750zM505 755 700 825 890 868 870 882 700 850 505 785zM505 800 640 860 800 900 765 915 620 885 505 835zM505 850 600 888 740 925 700 935 560 900 505 870z"/>
            </g>
            <path fill="#c8e2fb" d="M662 505C660 570 620 650 517 734L450 700 560 450z"/>
            <path d="M880 424C882 560 850 690 740 790 670 850 590 885 505 880"/>
            <path d="M1122 480C1125 600 1090 720 1000 810 900 910 780 940 700 935 630 932 570 910 500 875"/>
          </g>
          <ellipse class="lav" cx="899" cy="811" rx="393" ry="386"/>
          <path class="axis" opacity=".5" stroke-dasharray="10 3 2 3" d="M550 485 660 518"/>
          <path class="axis" stroke-dasharray="10 3 2 3" d="M660 518 855 580"/>
          <path class="axis2" stroke-dasharray="10 3 2 3" d="M780 610 913 838"/>
        </g>

        <g transform="translate(240 1220) scale(.333333)">
          <path d="M153 150 200 138 240 152 235 208 188 224 158 207z" fill="#d7e3f5" stroke="#a8bbdd" stroke-width="2"/>
          <path d="M153 150 200 138 240 152 190 166z" fill="#bacdf0"/><path d="M190 166 240 152 235 208 188 224z" fill="#c5d3ee"/>
          <path d="M185 152c2-16 22-16 25 0-4 8-21 8-25 0z" fill="#0b0bf0"/><ellipse cx="169" cy="185" rx="11" ry="13" fill="#f01010"/><ellipse cx="215" cy="190" rx="12" ry="12" fill="#0c8c0c"/>
          <path d="M199 130v-20M190 115l14-35 8 35z" fill="#0b0bf0" stroke="#0b0bf0" stroke-width="2"/><path d="M199 130v-20" stroke="#0b0bf0" stroke-width="5"/>
          <path d="M153 189l-15 3" stroke="#f55" stroke-width="5"/><path d="M105 200 138 183 145 203z" fill="#fa5a5a"/>
          <path d="M232 198l10 5" stroke="#87cb87" stroke-width="5"/><path d="M245 196 272 221 234 213z" fill="#87cb87"/>
          <g class="triad"><text x="195" y="66" fill="#1414f0">Z</text><text x="68" y="218" fill="#f01414">X</text><text x="282" y="244" fill="#128a12">Y</text></g>
        </g>
      </svg>
      <p class="hint">Select guide curves to influence blend, or faces to which the blend will be tangent.</p>
      <div class="tools">
        <button aria-label="Select"><svg viewBox="0 0 24 24"><path d="M7 4v15l4-4 3 6 2.500-1-2.500-6h4z" fill="#d4d4d4" stroke="#bbb"/></svg></button>
        <button class="lg" aria-label="Blend"><svg viewBox="0 0 36 36"><path d="M3 16 15 11l16 5v9L18 32 3 24z" fill="#f3ddcf" stroke="#dcc3b6"/><path d="M3 16 18 22l13-6-16-5z" fill="#dcc0b0"/><path d="M18 22l13-6v9L18 32z" fill="#efcfb9"/><path d="M8 12c5-8 13-6 17 7M12 20c2-14 10-16 14-10" fill="none" stroke="#bfe4f5" stroke-width="2.500"/></svg></button>
        <button aria-label="Guide curve"><svg viewBox="0 0 24 24"><path d="M2 21c3-6 6-2 10-4s3-4 5-6" fill="none" stroke="#c8e4f2" stroke-width="2.500"/><path d="M22 4 14 13l5 2z" fill="#eaf3f8" stroke="#b5cbd8"/></svg></button>
        <button class="ok" aria-label="Complete"><svg viewBox="0 0 24 24"><path d="M2 14l4-1 3 4C12 11 16 5 22 2 17 8 13 15 10 22H8z" fill="#b2e2b4"/></svg></button>
      </div>
      <div class="brand"><strong>ANSYS</strong><span>2021 <b>R1</b></span></div>
    </div>
    <div class="doctabs">
      <button class="doctab"><svg width="16" height="16" viewBox="0 0 16 16"><rect width="16" height="16" rx="2" fill="#ffc928"/><path d="M5 1h6l4 13h-4L8 4 5 14H1z" fill="#222"/></svg>SYS<svg class="x" width="8" height="8" viewBox="0 0 8 8"><path d="M1 1l6 6M7 1 1 7" stroke="#7b7b7b" stroke-width="1.800"/></svg></button>
      <div class="docnav">
        <button aria-label="Previous"><svg viewBox="0 0 8 8"><path d="M5.500.500v7L2 4z" fill="none" stroke="#666"/></svg></button>
        <button aria-label="Next"><svg viewBox="0 0 8 8"><path d="M2.500.500v7L6 4z" fill="none" stroke="#666"/></svg></button>
        <button aria-label="Close document"><svg viewBox="0 0 8 8"><path d="M.5.500l7 7M7.500.500l-7 7" stroke="#444" stroke-width="1.400"/></svg></button>
      </div>
    </div>
  </section>
</main>

<footer class="status">
  <span class="msg">Select guide curves to influence blend, or faces to which the blend will be tangent.</span>
  <span class="cell c204"></span>
  <span class="cell c36"><svg width="14" height="14" viewBox="0 0 14 14"><circle cx="7" cy="7" r="6.500" fill="#66727e"/><path d="M7 2.500v5.500M7 9.500v2" stroke="#b9c0c7" stroke-width="2"/></svg><i class="caret up pale"></i></span>
  <span class="cell c204"></span>
  <span class="cell tray">
    <button aria-label="Selection depth"><svg width="10" height="18" viewBox="0 0 10 18"><path d="M5 0l5 6H0zM5 18l5-6H0z" fill="#6d7f91"/></svg></button>
    <button aria-label="Undo selection"><svg width="18" height="16" viewBox="0 0 18 16"><path d="M9 3.500c5-3 9 2 5 7" fill="none" stroke="#68b0f2" stroke-width="2.600"/><path d="M8 0v7l6-1z" fill="#68b0f2"/><use href="#cursor" width="12" height="16"/></svg></button>
    <button aria-label="Select"><svg width="12" height="16"><use href="#cursor"/></svg></button>
    <button class="more" aria-label="Select list"><i class="caret up white"></i></button>
    <button class="roomy" aria-label="Box select"><svg width="17" height="14" viewBox="0 0 17 14"><rect x="1" y="1" width="15" height="12" fill="none" stroke="#68b0f2" stroke-width="1.600" stroke-dasharray="3 2"/></svg></button>
    <button class="more" aria-label="Box select list"><i class="caret up white"></i></button>
    <button class="split" aria-label="Spin"><svg width="16" height="16" viewBox="0 0 16 16"><path d="M1 6C5 3.500 10 4 14 8.500M10.500 9H15V5M6.500 1.500C9.500 5 9 10 6 14M6 10v4.500h4.500M1 8l3.500 1.500M8 1l3 1.500" fill="none" stroke="#68b0f2" stroke-width="2"/></svg></button>
    <button class="more" aria-label="Spin list"><i class="caret up white"></i></button>
    <button class="roomy" aria-label="Pan"><svg width="16" height="16" viewBox="0 0 16 16"><path d="M8 1v14M1 8h14M5.500 3.500 8 1l2.500 2.500M5.500 12.500 8 15l2.500-2.500M3.500 5.500 1 8l2.500 2.500M12.500 5.500 15 8l-2.500 2.500" fill="none" stroke="#68b0f2" stroke-width="1.600"/></svg></button>
    <button aria-label="Zoom"><svg width="16" height="16" viewBox="0 0 16 16"><path d="M10 10l4.500 4.500" stroke="#68b0f2" stroke-width="3"/><circle cx="7" cy="7" r="6" fill="#fff" stroke="#a8d2f7"/></svg></button>
    <button class="more" aria-label="Zoom list"><i class="caret up white"></i></button>
    <button class="roomy" aria-label="Previous view"><svg width="16" height="12" viewBox="0 0 16 12"><path d="M15 2 7 7" stroke="#76bbfa" stroke-width="3.400"/><path d="M0 11.500 3 3l6 8z" fill="#76bbfa"/></svg></button>
    <button aria-label="Next view"><svg width="16" height="12" viewBox="0 0 16 12"><path d="M1 10l8-5" stroke="#71869a" stroke-width="3.400"/><path d="M16 .5 13 9 7 1z" fill="#71869a"/></svg></button>
  </span>
</footer>
</body>
</html>
```
FILE: styles.css
```css
* { box-sizing: border-box; }

body {
  margin: 0;
  min-height: 100vh;
  display: grid;
  grid-template-rows: auto auto auto 1fr auto;
  background: #fff;
  color: #1a1a1a;
  font: 11px/13px "Liberation Sans", Arial, sans-serif;
}

button {
  border: 0;
  padding: 0;
  margin: 0;
  background: none;
  color: inherit;
  font: inherit;
}

svg { display: block; flex: none; }
.defs { position: absolute; width: 0; height: 0; }

.caret {
  width: 0;
  height: 0;
  border: 3px solid transparent;
  border-bottom: 0;
  border-top-color: #1a1a1a;
  flex: none;
}
.caret.white { border-top-color: #fff; }
.caret.pale { border-top-color: #9db2c6; }
.caret.up { border-top: 0; border-bottom: 5px solid #fff; }
.caret.up.pale { border-bottom-color: #9db2c6; }
.caret.inl { display: inline-block; margin-left: 2px; vertical-align: 3px; margin-right: -8px; }
:disabled .caret { border-top-color: #8f8f8f; }

/* title bar */
.titlebar {
  display: flex;
  height: 39px;
  background: #2c5c85;
  color: #f0f4f8;
}
.qat {
  width: 180px;
  display: flex;
  align-items: flex-start;
  padding: 5px 0 0 5px;
}
.sc { width: 17px; height: 17px; }
.sc-text { font: bold 8px "Liberation Sans", Arial, sans-serif; fill: #fff; }
.qat-sep { width: 1px; height: 17px; margin: 0 8px 0 6px; background: #8ea8bf; }
.q { height: 17px; display: flex; align-items: center; justify-content: center; }
.q svg { width: 100%; }
.q-open { width: 16px; }
.q-save { width: 14px; margin-left: 10px; }
.q-undo { width: 15px; margin-left: 9px; }
.q-drop { width: 6px; margin-left: 8px; }
.q-drop + .q-undo { margin-left: 8px; }
.q-more { width: 6px; margin-left: 19px; }
.title { flex: 1; text-align: center; padding-top: 12px; }
.winctl { width: 80px; display: flex; gap: 17px; padding: 11px 0 0 2px; height: 22px; }
.winctl button { width: 11px; }

/* ribbon tabs */
.tabs {
  display: flex;
  height: 22px;
  background: #2c5c85;
  color: #f0f4f8;
}
.tab { padding: 1px 12px 0; }
.tab.file { padding: 0 24px 0 23px; }
.tab.off { color: #8a9aa9; padding-right: 13px; }
.tab.active { background: #f0f0f0; color: #3a6a96; }
.tabs-end { margin-left: auto; display: flex; align-items: center; gap: 13px; padding-right: 9px; }

/* ribbon */
.ribbon {
  display: flex;
  height: 90px;
  background: #f0f0f0;
  border-bottom: 2px solid #9fb6cf;
  border-left: 1px solid #4d7da8;
  padding: 3px 0 4px;
}
.group { display: flex; flex-direction: column; border-right: 1px solid #d8d8d8; }
.gbody { flex: 1; display: flex; }
.gbody.rows { display: grid; grid-template-rows: repeat(3, 21px); align-content: start; padding: 3px 0 0 5px; }
.gbody.col { flex-direction: column; padding-left: 6px; }
.glabel { text-align: center; line-height: 12px; }
.g-clip { width: 77px; }
.g-orient { width: 81px; }
.g-style { width: 387px; }
.g-camera { width: 53px; }
.g-window { width: 157px; }
.g-grid { width: 138px; }
.g-display { width: 65px; }

.big { display: flex; flex-direction: column; align-items: center; padding-top: 4px; }
.big > span:not(.swatch) { margin-top: 2px; }
.big .ico { width: 26px; height: 34px; }
.big .ico.w30 { width: 30px; }
.big .caret { margin-top: 4px; }
.big .caret.inl { margin-top: 0; }
.dim { color: #a5a5a5; }
.g-clip .big { width: 54px; padding-left: 3px; }
.minis { display: grid; grid-template-rows: repeat(3, 21px); align-content: start; padding-top: 1px; }
.minis button { display: flex; align-items: center; justify-content: center; }
.minis.duo { padding-left: 6px; }
.minis.duo button { gap: 10px; }
.line { display: flex; align-items: center; gap: 2px; padding: 0 0 0 1px; }
.line .caret { margin-left: 5px; }
.plain { display: flex; align-items: center; }
.plain.drop1 { width: 14px; margin: 0 3px 0 2px; }

.g-style .big { width: 46px; }
.swatch {
  width: 33px;
  height: 34px;
  border: 1px solid #b3b3b3;
  background: #d0d0d0;
  display: flex;
  align-items: flex-end;
  justify-content: flex-end;
  padding: 2px;
}
.lines { width: 244px; display: flex; flex-wrap: wrap; align-content: flex-start; padding-top: 5px; color: #a5a5a5; }
.wide { display: flex; align-items: center; height: 30px; }
.wide .caret { margin-left: auto; }
.w1 { width: 102px; }
.w2 { width: 139px; padding-left: 5px; }
.w3 { width: 241px; padding-left: 2px; }
.rule { width: 59px; height: 1px; background: #999; margin-right: -2px; }
.rule.thick { width: 43px; height: 3px; background: #909090; }
.lt { color: #a5a5a5; }
.w2 .lt { margin-left: 8px; }
.g-style .big:nth-of-type(2) { width: 56px; }

.cam { height: 28px; margin-top: 3px; gap: 10px; }
.g-window .gbody { padding-left: 1px; }
.g-window .big:nth-child(1) { width: 50px; }
.g-window .big:nth-child(2) { width: 40px; }
.g-window .big:nth-child(3) { width: 62px; }
.g-display .big { width: 60px; }

/* tick boxes */
input[type=checkbox] {
  appearance: none;
  width: 13px;
  height: 13px;
  margin: 0;
  border: 1px solid #a0a0a0;
  background: #fff;
  flex: none;
  display: grid;
  place-items: center;
}
input[type=checkbox]:checked::before {
  content: "";
  width: 8px;
  height: 4px;
  border: solid #333;
  border-width: 0 0 1px 1px;
  transform: translateY(-1px) rotate(-48deg);
}
input.soft:checked::before { border-color: #8a8a8a; }
input.soft { border-color: #bdbdbd; }
input[type=checkbox]:disabled { border-color: #d0d0d0; }
input[type=checkbox]:disabled:checked::before { border-color: #b8b8b8; border-width: 0 0 2px 2px; }
.chk { display: flex; align-items: center; gap: 3px; color: #c4c4c4; white-space: nowrap; }

/* work area */
.work {
  display: grid;
  grid-template-columns: 244px minmax(0, 1fr);
  border-left: 1px solid #5b87ae;
  border-right: 1px solid #5b87ae;
}
.side { display: flex; flex-direction: column; padding: 3px 4px 0 4px; }
.phead {
  margin: 0;
  height: 19px;
  padding: 0 6px 0 3px;
  display: flex;
  align-items: center;
  justify-content: space-between;
  background: #f7f7fc;
  font: inherit;
}
.phead svg { width: 8px; height: 9px; }
.tree {
  flex: 477 1 0;
  margin: 0;
  padding: 3px 0 0 7px;
  list-style: none;
}
.tree li { height: 16px; display: flex; align-items: center; }
.tree i { width: 10px; height: 10px; margin-right: 4px; flex: none; }
.tree .open { background: #555; clip-path: polygon(90% 10%, 90% 90%, 10% 90%); }
.tree .shut::before {
  content: "";
  display: block;
  width: 6px;
  height: 8px;
  margin: 1px 2px;
  background: #777;
  clip-path: polygon(0 0, 100% 50%, 0 100%, 0 0, 1px 2px, 1px 6px, 4px 4px, 1px 2px);
}
.tree svg { width: 16px; height: 16px; margin: 0 5px 0 3px; }
.faded { opacity: .4; }
.d1 { padding-left: 15px; }
.d2 { padding-left: 30px; }
.d3 { padding-left: 45px; }

.ptabs { display: flex; height: 26px; padding-left: 2px; background: #f7f7fc; align-items: flex-start; }
.ptabs button { height: 22px; padding: 1px 4px 0; }
.ptabs .on {
  background: #f0f0f0;
  color: #3a6a96;
  border: solid #5b87ae;
  border-width: 0 1px;
}
.opt { margin-top: 4px; height: 22px; }
.options { display: flex; height: 78px; color: #7d7d7d; }
.optbody { flex: 1; }
.general {
  height: 24px;
  display: flex;
  align-items: center;
  gap: 5px;
  padding-left: 4px;
  background: #f7f7fc;
  color: #1a1a1a;
}
.general svg { color: #555; }
.ops { display: flex; gap: 8px; padding: 9px 0 0 9px; }
.ops button { display: flex; align-items: center; gap: 5px; }
.rot { display: flex; align-items: center; gap: 7px; padding: 9px 0 0 8px; }
.scroll {
  width: 17px;
  background: #f0f0f0;
  display: flex;
  flex-direction: column;
  align-items: center;
  padding: 6px 0 5px;
}
.thumb { width: 17px; height: 16px; margin-top: 5px; background: #cdcdcd; }
.down { margin-top: auto; }
.prop { margin-top: 4px; height: 21px; }
.props { flex: 536 1 0; margin: 0 -1px; border: 1px solid #a0a0a0; background: #fff; }

/* document area */
.docs { display: flex; flex-direction: column; padding-top: 4px; }
.canvas {
  flex: 1;
  position: relative;
  margin: 0 5px 3px 1px;
  border: 1px solid #c3c1a9;
  background: #fff;
  padding: 7px 15px 0 11px;
}
.scene { position: absolute; inset: 0; width: 100%; height: 100%; }
.edges path, .edges ellipse { stroke: #4f6682; stroke-width: 1px; vector-effect: non-scaling-stroke; }
.edges > path:not([fill]), .edges g > path:not([fill]), .edges > ellipse:not([fill]) { fill: none; }
.edges .flat, .edges .flat path { stroke: none; }
.edges path.flat[stroke] { stroke: #7fa283; stroke-width: 8px; }
.edges g.flat > path:not([fill]) { fill: inherit; }
.green path { stroke: #2d5a3c; }
.green path.b2, .green path.bold { stroke: #16361f; }
.green .lav { stroke: #5b6283; }
.green .axis { stroke: #2f7d3c; }
.green .axis2 { stroke: #2c5f7d; }
.triad { font: bold 33px "Liberation Sans", Arial, sans-serif; }

.hint { position: relative; margin: 0; font-size: 13px; line-height: 16px; color: #777; }
.tools { position: relative; width: 40px; display: flex; flex-direction: column; align-items: flex-start; padding-top: 6px; }
.tools button { width: 26px; height: 26px; border: 1px solid #e2e2e2; border-radius: 4px; background: #fff; }
.tools .lg { width: 38px; height: 38px; margin: 25px 0 12px 1px; border-color: #d6d6d6; border-radius: 6px; }
.tools .ok { margin-top: 24px; }
.brand {
  position: absolute;
  top: 25px;
  right: 15px;
  display: flex;
  flex-direction: column;
  align-items: flex-end;
  color: #4a4a4a;
  font-family: Inter, sans-serif;
}
.brand strong { font-size: 23px; line-height: 23px; font-weight: 700; }
.brand span { font-size: 14px; line-height: 13px; }

.doctabs {
  display: flex;
  justify-content: space-between;
  align-items: flex-start;
  height: 25px;
  border-top: 1px solid #a9a9a9;
  border-left: 1px solid #888;
  background: #f7f7fc;
  margin-right: 1px;
  padding-left: 1px;
}
.doctab {
  display: flex;
  align-items: center;
  gap: 4px;
  height: 21px;
  padding: 0 4px 0 4px;
  border: solid #4d7da8;
  border-width: 0 1px 2px;
  color: #2c5c85;
  background: #fff;
}
.doctab .x { margin-bottom: 3px; }
.docnav { display: flex; gap: 6px; padding: 6px 7px 0 0; }
.docnav svg { width: 8px; height: 8px; }

/* status bar */
.status {
  display: flex;
  height: 32px;
  align-items: center;
  background: #2c5c85;
  color: #f0f4f8;
}
.msg { flex: 1; padding-left: 11px; }
.cell { height: 24px; border-left: 1px solid #6f90ae; display: flex; align-items: center; }
.c204 { width: 204px; }
.c36 { width: 36px; padding-left: 5px; gap: 7px; }
.tray { width: 579px; justify-content: flex-end; padding-right: 18px; }
.tray button { width: 23px; height: 24px; display: flex; align-items: center; justify-content: center; }
.tray .more { width: 10px; }
.tray .roomy { width: 26px; }
.split { border-left: 1px solid #6f90ae; }
```
